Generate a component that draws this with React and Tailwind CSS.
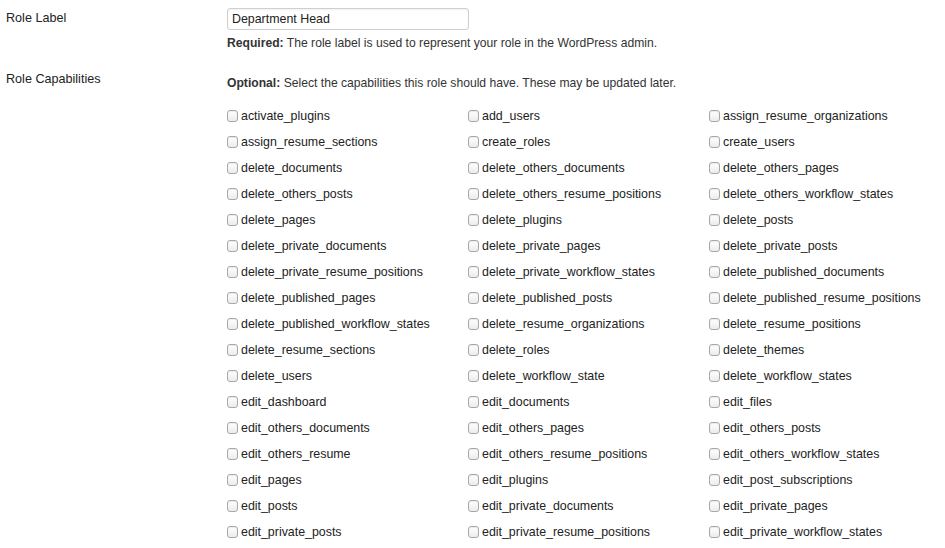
const caps = [
  "activate_plugins", "add_users", "assign_resume_organizations",
  "assign_resume_sections", "create_roles", "create_users",
  "delete_documents", "delete_others_documents", "delete_others_pages",
  "delete_others_posts", "delete_others_resume_positions", "delete_others_workflow_states",
  "delete_pages", "delete_plugins", "delete_posts",
  "delete_private_documents", "delete_private_pages", "delete_private_posts",
  "delete_private_resume_positions", "delete_private_workflow_states", "delete_published_documents",
  "delete_published_pages", "delete_published_posts", "delete_published_resume_positions",
  "delete_published_workflow_states", "delete_resume_organizations", "delete_resume_positions",
  "delete_resume_sections", "delete_roles", "delete_themes",
  "delete_users", "delete_workflow_state", "delete_workflow_states",
  "edit_dashboard", "edit_documents", "edit_files",
  "edit_others_documents", "edit_others_pages", "edit_others_posts",
  "edit_others_resume", "edit_others_resume_positions", "edit_others_workflow_states",
  "edit_pages", "edit_plugins", "edit_post_subscriptions",
  "edit_posts", "edit_private_documents", "edit_private_pages",
  "edit_private_posts", "edit_private_resume_positions", "edit_private_workflow_states",
];

function Box() {
  return (
    <span className="inline-block w-[11px] h-[12px] rounded-[3px] border border-[#a8a8a8] bg-gradient-to-b from-white to-[#ececec] shadow-[inset_0_1px_1px_rgba(0,0,0,0.08)] shrink-0" />
  );
}

export default function App() {
  return (
    <div className="w-[945px] h-[548px] overflow-hidden bg-white text-[#222] text-[12.15px] leading-[16px]" style={{ fontFamily: '"Liberation Sans", Arial, sans-serif' }}>
      <div className="flex pt-[8px]">
        <div className="w-[227px] shrink-0 pl-[6px] pt-[2px] text-[12.6px]">Role Label</div>
        <div>
          <div className="w-[242px] h-[22px] rounded-[3px] border border-[#cfcfcf] bg-white px-[4px] flex items-center shadow-[inset_0_1px_2px_rgba(0,0,0,0.06)] text-[12.4px]">
            Department Head
          </div>
          <div className="mt-[5px] text-[#333] whitespace-nowrap"><b className="font-bold">Required:</b> The role label is used to represent your role in the WordPress admin.</div>
        </div>
      </div>
      <div className="flex mt-[20px]">
        <div className="w-[227px] shrink-0 pl-[6px] text-[12.6px]">Role Capabilities</div>
        <div>
          <div className="mt-[4px] text-[#333] whitespace-nowrap"><b className="font-bold">Optional:</b> Select the capabilities this role should have. These may be updated later.</div>
          <div className="grid grid-cols-[241px_241px_236px] mt-[12px]">
            {caps.map((c) => (
              <div key={c} className="flex items-center h-[26px] gap-[3px] whitespace-nowrap text-[12.4px]">
                <Box />
                <span>{c}</span>
              </div>
            ))}
          </div>
        </div>
      </div>
    </div>
  );
}
